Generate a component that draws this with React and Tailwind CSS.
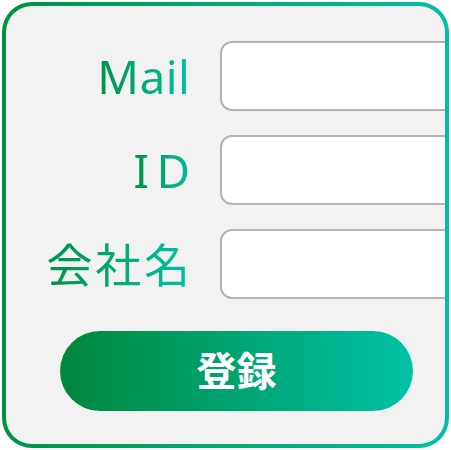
const labelCls =
  "inline-block bg-linear-to-r from-[#009245] to-[#00c2a4] bg-clip-text text-transparent";

function Row({ label, spacing }) {
  return (
    <div className="flex items-center">
      <div className="w-[184px] shrink-0 text-right">
        <span className={`${labelCls} ${spacing}`}>{label}</span>
      </div>
      <input
        type="text"
        className="ml-[30px] h-[70px] w-[300px] shrink-0 rounded-[12px] border-2 border-[#b3b3b3] bg-white px-4 outline-none"
      />
    </div>
  );
}

export default function App() {
  return (
    <div
      className="h-[450px] w-[451px] bg-white p-[2px]"
      style={{ fontFamily: '"Noto Sans", "Noto Sans CJK JP", sans-serif' }}
    >
      <div className="h-[446px] w-[447px] rounded-[30px] bg-linear-to-r from-[#009240] to-[#00c0a3] p-[4px]">
        <div className="flex h-full flex-col overflow-hidden rounded-[26px] bg-[#f2f2f2] pt-[35px]">
          <div className="flex flex-col gap-[24px] text-[46px] leading-none">
            <Row label="Mail" spacing="tracking-[0.01em] mr-[-0.01em]" />
            <Row label="ID" spacing="tracking-[0.16em] mr-[-0.16em]" />
            <Row label="会社名" spacing="tracking-[0.06em] mr-[-0.06em]" />
          </div>
          <button
            type="button"
            className="ml-[54px] mt-[32px] flex h-[80px] w-[353px] items-center justify-center rounded-full bg-linear-to-r from-[#00873a] to-[#00c2a6] text-[40px] font-bold text-white"
          >
            登録
          </button>
        </div>
      </div>
    </div>
  );
}
